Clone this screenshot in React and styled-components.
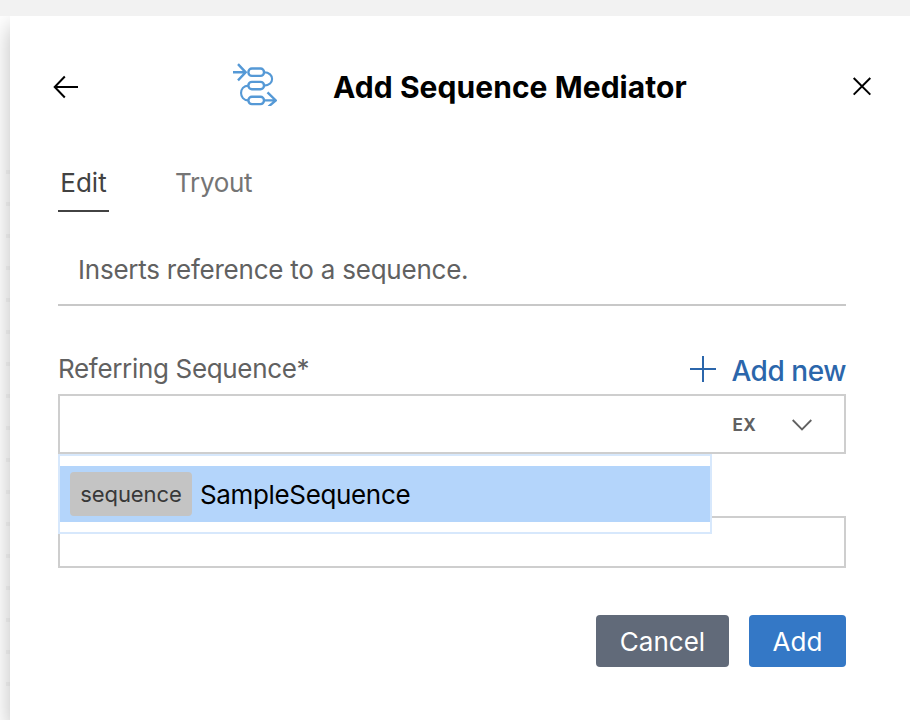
import React from "react";
import styled, { createGlobalStyle, css } from "styled-components";

const GlobalStyle = createGlobalStyle`
  * { box-sizing: border-box; }
  body {
    margin: 0;
    overflow: hidden;
    font-family: Inter, "Liberation Sans", sans-serif;
    background: #fff;
  }
  button { font: inherit; border: 0; background: none; padding: 0; margin: 0; }
`;

const Screen = styled.div`
  display: flex;
  flex-direction: column;
  width: 910px;
  height: 720px;
  overflow: hidden;
`;

const TopBar = styled.div`
  flex: none;
  height: 16px;
  background: #f2f2f2;
`;

const Workspace = styled.div`
  flex: 1;
  display: flex;
  min-height: 0;
  overflow: hidden;
`;

const CanvasEdge = styled.div`
  flex: none;
  width: 10px;
  padding: 154px 0 0 6px;
  display: flex;
  flex-direction: column;
  gap: 28px;
  background: #fff;
`;

const GridDot = styled.i`
  flex: none;
  width: 4px;
  height: 4px;
  background: #f6f6f6;
`;

const Panel = styled.main`
  flex: 1;
  display: flex;
  flex-direction: column;
  padding: 0 64px 0 48px;
  background: #fff;
  box-shadow: 0 10px 22px rgba(0, 0, 0, 0.26);
`;

const Header = styled.header`
  flex: none;
  display: flex;
  align-items: center;
  height: 142px;
  margin: 0 -30px 0 -6px;
`;

const BackButton = styled.button`
  display: flex;
  width: 28px;
  height: 28px;
`;

const CloseButton = styled(BackButton)`
  margin-left: auto;
`;

const SequenceLogo = styled.svg`
  flex: none;
  margin: -6px 0 0 151px;
`;

const Title = styled.h1`
  margin: 0 0 0 56px;
  font-size: 30px;
  line-height: 36px;
  font-weight: 700;
  letter-spacing: 0.06px;
  color: #000;
  white-space: nowrap;
`;

const Tabs = styled.nav`
  flex: none;
  display: flex;
  align-items: flex-start;
  gap: 64px;
  height: 54px;
`;

const Tab = styled.button`
  height: 54px;
  padding: 4px 2px 8px;
  font-size: 26px;
  line-height: 32px;
  white-space: nowrap;
  letter-spacing: ${(p) => (p.$active ? 0 : -0.3)}px;
  color: ${(p) => (p.$active ? "#424242" : "#757575")};
  ${(p) =>
    p.$active &&
    css`
      width: 51px;
      padding: 4px 1.5px 6px;
      border-bottom: 2px solid #424242;
    `}
`;

const Description = styled.p`
  flex: none;
  height: 94px;
  margin: 0;
  padding: 42px 20px 0;
  border-bottom: 2px solid #c8c8c8;
  font-size: 26px;
  line-height: 32px;
  letter-spacing: -0.23px;
  color: #616161;
`;

const FieldHead = styled.div`
  flex: none;
  display: flex;
  justify-content: space-between;
  height: 88px;
  padding-top: 47px;
`;

const Label = styled.label`
  font-size: 26px;
  line-height: 32px;
  letter-spacing: -0.33px;
  color: #616161;
  white-space: nowrap;
`;

const AddNew = styled.button`
  display: flex;
  align-items: center;
  gap: 14px;
  height: 36px;
  font-size: 28px;
  font-weight: 500;
  line-height: 36px;
  letter-spacing: -0.45px;
  color: #2b66ab;
  white-space: nowrap;

  svg { margin-top: -5px; }
`;

const ComboBox = styled.div`
  position: relative;
  flex: none;
  display: flex;
  align-items: center;
  justify-content: flex-end;
  height: 60px;
  padding-right: 32px;
  border: 2px solid #cecece;
`;

const ExpressionToggle = styled.button`
  margin-right: 36px;
  padding-top: 2px;
  font-size: 17px;
  line-height: 20px;
  font-weight: 700;
  letter-spacing: 0.3px;
  color: #616161;
`;

const Chevron = styled.svg`
  margin-top: 1px;
`;

const Menu = styled.div`
  position: absolute;
  z-index: 1;
  top: 58px;
  left: -2px;
  width: 654px;
  height: 80px;
  padding: 10px 0;
  border: 2px solid #d7e8fc;
  background: #fff;
`;

const Option = styled.div`
  display: flex;
  align-items: center;
  gap: 8px;
  height: 56px;
  padding: 0 10px;
  background: #b4d5fb;
`;

const TypeTag = styled.span`
  flex: none;
  width: 122px;
  height: 44px;
  border-radius: 4px;
  background: #c4c4c4;
  color: #383838;
  font-size: 22px;
  line-height: 44px;
  letter-spacing: -0.05px;
  text-align: center;
`;

const OptionName = styled.span`
  padding-top: 2px;
  font-size: 26px;
  line-height: 32px;
  letter-spacing: -0.35px;
  color: #000;
  white-space: nowrap;
`;

const TextField = styled.div`
  flex: none;
  height: 52px;
  margin-top: 62px;
  border: 2px solid #cecece;
`;

const Actions = styled.footer`
  flex: none;
  display: flex;
  justify-content: flex-end;
  gap: 20px;
  margin-top: 47px;
`;

const ActionButton = styled.button`
  width: ${(p) => (p.$primary ? 97 : 133)}px;
  height: 52px;
  padding-top: 2px;
  border-radius: 4px;
  background: ${(p) => (p.$primary ? "#3478c6" : "#616a79")};
  color: #fff;
  font-size: 26px;
  line-height: 50px;
  text-align: center;
`;

const dots = Array.from({ length: 17 }, (_, i) => i);

export default function App() {
  return (
    <Screen>
      <GlobalStyle />
      <TopBar />
      <Workspace>
        <CanvasEdge>
          {dots.map((d) => (
            <GridDot key={d} />
          ))}
        </CanvasEdge>
        <Panel>
          <Header>
            <BackButton aria-label="Back">
              <svg width="28" height="28" viewBox="0 0 28 28" fill="none" stroke="#000" strokeWidth="2">
                <path d="M12.8 3.5 2.7 14l10.1 10.5M3 14h23" />
              </svg>
            </BackButton>
            <SequenceLogo width="46" height="44" viewBox="0 0 46 44" fill="none" stroke="#5599d6" strokeWidth="2.4">
              <path d="M2 10.3h12.500M7 2.200l7.700 8.100L7 18.400" />
              <rect x="17.4" y="6.5" width="15.6" height="7.4" rx="3.5" />
              <rect x="17.4" y="19.9" width="15.6" height="7.4" rx="3.5" />
              <rect x="17.4" y="34.7" width="15.6" height="7.4" rx="3.5" />
              <path
                strokeWidth="2.1"
                d="M33 10.300c10.800 0 10.800 13.300 0 13.300M17.400 23.600c-9.800 0-9.800 14.800 0 14.800"
              />
              <path d="M33 38.400h11.500M36.500 30.400l8.300 8-7.300 6.200" />
            </SequenceLogo>
            <Title>Add Sequence Mediator</Title>
            <CloseButton aria-label="Close">
              <svg width="28" height="28" viewBox="0 0 28 28" fill="none" stroke="#000" strokeWidth="2">
                <path d="m5.700 5 16.600 16.600M22.300 5 5.700 21.600" />
              </svg>
            </CloseButton>
          </Header>
          <Tabs>
            <Tab $active>Edit</Tab>
            <Tab>Tryout</Tab>
          </Tabs>
          <Description>Inserts reference to a sequence.</Description>
          <FieldHead>
            <Label>Referring Sequence*</Label>
            <AddNew>
              <svg width="28" height="28" viewBox="0 0 28 28" fill="none" stroke="#2b66ab" strokeWidth="2">
                <path d="M14 1v26M1 14h26" />
              </svg>
              Add new
            </AddNew>
          </FieldHead>
          <ComboBox>
            <ExpressionToggle>EX</ExpressionToggle>
            <Chevron width="20" height="12" viewBox="0 0 20 12" fill="none" stroke="#616161" strokeWidth="1.8">
              <path d="m.7 1 9.300 9.500L19.300 1" />
            </Chevron>
            <Menu>
              <Option>
                <TypeTag>sequence</TypeTag>
                <OptionName>SampleSequence</OptionName>
              </Option>
            </Menu>
          </ComboBox>
          <TextField />
          <Actions>
            <ActionButton>Cancel</ActionButton>
            <ActionButton $primary>Add</ActionButton>
          </Actions>
        </Panel>
      </Workspace>
    </Screen>
  );
}
